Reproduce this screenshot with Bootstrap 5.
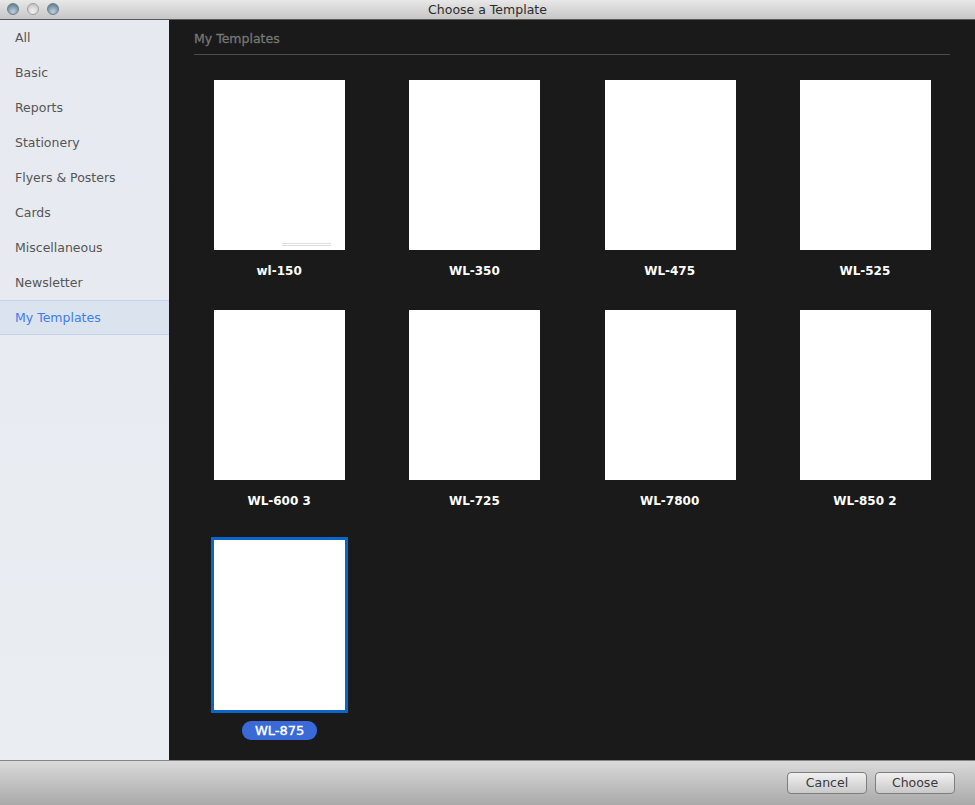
<!DOCTYPE html>
<html lang="en">
<head>
<meta charset="utf-8">
<title>Choose a Template</title>
<link href="https://cdn.jsdelivr.net/npm/bootstrap@5.3.0/dist/css/bootstrap.min.css" rel="stylesheet">
<style>
html,body{height:100%;}
body{margin:0;background:#1a1a1a;font-family:"DejaVu Sans","Liberation Sans",sans-serif;font-size:12.5px;overflow:hidden;}
.win{width:975px;height:805px;}
.titlebar{height:20px;flex:none;background:linear-gradient(#e8e8e8,#c6c6c6);border-bottom:1px solid #5a5a5a;color:#2c2c2c;font-size:12.5px;line-height:20px;position:relative;}
.lights{position:absolute;left:7px;top:3px;gap:8px;}
.light{width:12px;height:12px;border-radius:50%;background:radial-gradient(circle at 50% 75%,#bcd0dc 0,#8ba6b6 45%,#4f6a7c 100%);border:1px solid #6d7f8b;}
.light.off{background:radial-gradient(circle at 50% 75%,#f2f2f2 0,#d8d8d8 50%,#b4b4b4 100%);border-color:#a0a0a0;}
.side{width:169px;flex:none;background:linear-gradient(#e6eaf0,#eaedf2);}
.side-item{height:35px;line-height:35px;padding-left:15px;color:#555;border:0;}
.side-item.on{height:35px;line-height:33px;color:#3d7df0;background:#dbe3ee;border-top:1px solid #c5d3ef;border-bottom:1px solid #c5d3ef;}
.stage{background:#1a1a1a;min-width:0;padding:0 12px 0 13px;}
.stage-head{margin:0 13px 0 12px;height:35px;line-height:38px;color:#767676;font-size:12.5px;-webkit-text-stroke:.3px #767676;border-bottom:1px solid #4d4d4d;}
.tgrid{display:grid;grid-template-columns:repeat(4,1fr);grid-auto-rows:230px;padding-top:25px;}
.tcell{display:flex;flex-direction:column;align-items:center;}
.sheet{width:131px;height:170px;background:#fff;position:relative;}
.sheet.sel{outline:3px solid #0a66c8;outline-offset:0;}
.fine{position:absolute;left:68px;right:14px;bottom:3px;height:4px;background:repeating-linear-gradient(#dedede 0 1px,#fff 1px 2px);}
.tname{margin-top:12px;height:18px;line-height:19px;color:#fff;font-weight:700;font-size:12px;padding:0 13px 0 12px;border-radius:9px;}
.tname.sel{margin-top:11px;height:19px;width:75px;padding:0;text-align:center;line-height:20px;background:#3a69d8;font-weight:400;-webkit-text-stroke:.4px #fff;font-size:13px;}
.footbar{height:45px;flex:none;background:linear-gradient(#dadada,#a9a9a9);border-top:1px solid #858585;padding:0 20px 0 0;gap:8px;}
.mac{width:80px;height:22px;padding:0;font-size:12.5px;line-height:20px;color:#3a3a3a;border:1px solid #7e7e7e;border-radius:4px;background:linear-gradient(#f0f0f0,#c9c9c9);}
</style>
</head>
<body>
<div class="win d-flex flex-column">
  <div class="titlebar text-center">
    <div class="lights d-flex"><span class="light"></span><span class="light off"></span><span class="light"></span></div>
    Choose a Template
  </div>
  <div class="d-flex flex-grow-1" style="min-height:0">
    <div class="side">
      <div class="side-item">All</div>
      <div class="side-item">Basic</div>
      <div class="side-item">Reports</div>
      <div class="side-item">Stationery</div>
      <div class="side-item">Flyers &amp; Posters</div>
      <div class="side-item">Cards</div>
      <div class="side-item">Miscellaneous</div>
      <div class="side-item">Newsletter</div>
      <div class="side-item on">My Templates</div>
    </div>
    <div class="stage flex-grow-1">
      <div class="stage-head">My Templates</div>
      <div class="tgrid">
        <div class="tcell"><div class="sheet"><div class="fine"></div></div><div class="tname">wl-150</div></div>
        <div class="tcell"><div class="sheet"></div><div class="tname">WL-350</div></div>
        <div class="tcell"><div class="sheet"></div><div class="tname">WL-475</div></div>
        <div class="tcell"><div class="sheet"></div><div class="tname">WL-525</div></div>
        <div class="tcell"><div class="sheet"></div><div class="tname">WL-600 3</div></div>
        <div class="tcell"><div class="sheet"></div><div class="tname">WL-725</div></div>
        <div class="tcell"><div class="sheet"></div><div class="tname">WL-7800</div></div>
        <div class="tcell"><div class="sheet"></div><div class="tname">WL-850 2</div></div>
        <div class="tcell"><div class="sheet sel"></div><div class="tname sel">WL-875</div></div>
      </div>
    </div>
  </div>
  <div class="footbar d-flex justify-content-end align-items-center">
    <button type="button" class="btn mac">Cancel</button>
    <button type="button" class="btn mac">Choose</button>
  </div>
</div>
<script src="https://cdn.jsdelivr.net/npm/bootstrap@5.3.0/dist/js/bootstrap.bundle.min.js"></script>
</body>
</html>
